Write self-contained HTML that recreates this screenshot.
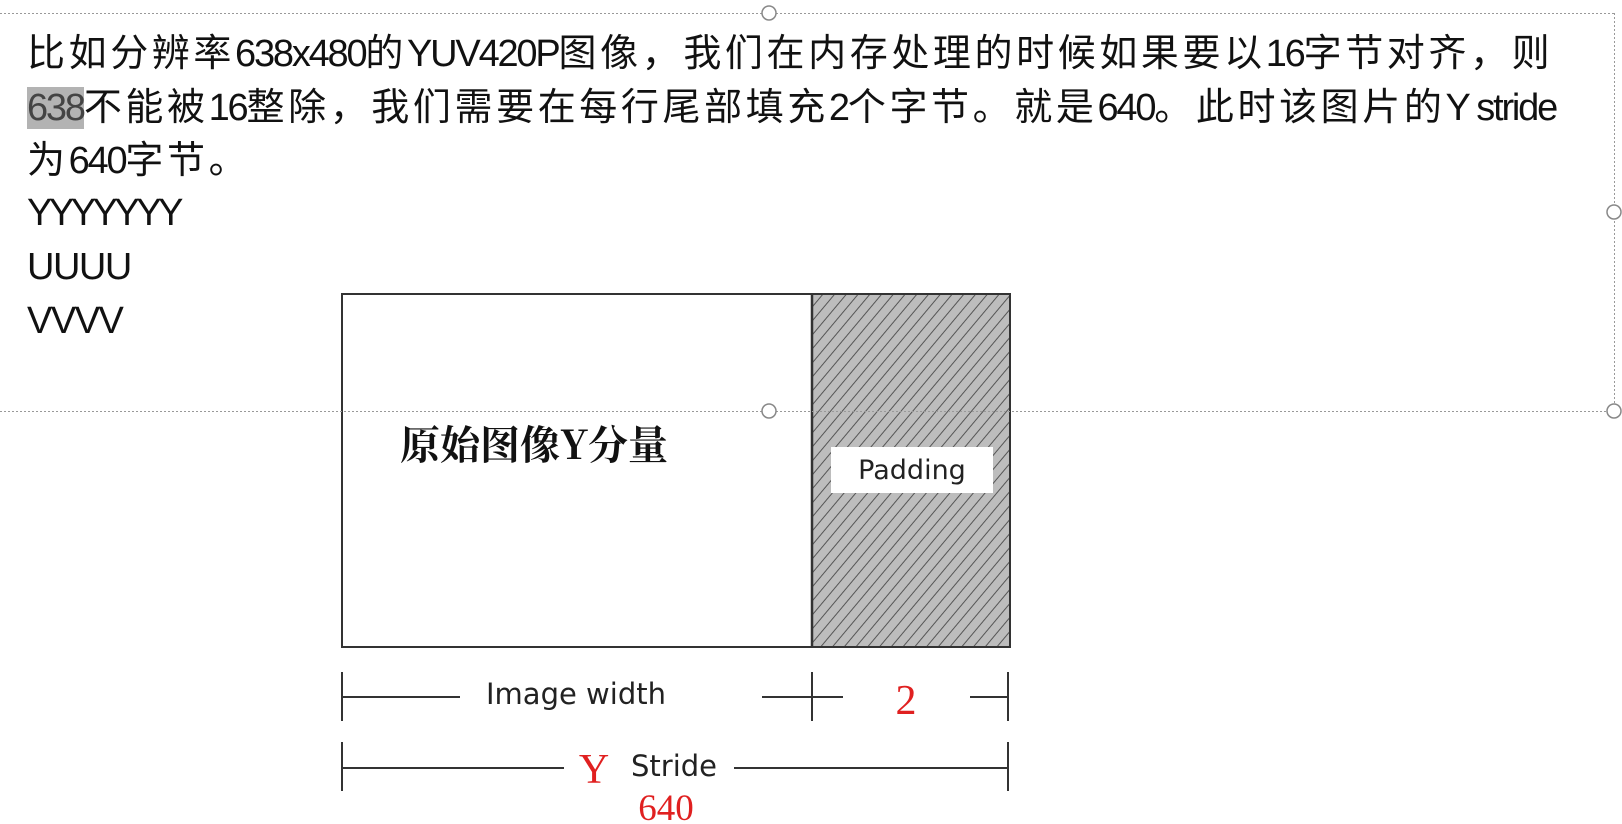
<!DOCTYPE html>
<html><head><meta charset="utf-8"><style>
html,body{margin:0;padding:0;background:#fff;width:1622px;height:824px;overflow:hidden;position:relative}
.t{position:absolute;left:27px;font-family:"Liberation Sans","Noto Sans CJK SC",sans-serif;font-size:38px;color:#111;white-space:nowrap;line-height:54px;letter-spacing:3.6px}
.l{letter-spacing:-2.2px}
.hl{background:#b3b3b3;color:#444}
svg{position:absolute;left:0;top:0}
</style></head><body>
<svg width="1622" height="824" viewBox="0 0 1622 824">
<defs>
<pattern id="h" width="9" height="9" patternUnits="userSpaceOnUse" patternTransform="rotate(40)">
<rect width="9" height="9" fill="#bdbdbd"/><line x1="0" y1="0" x2="0" y2="9" stroke="#555" stroke-width="2"/>
</pattern>
</defs>
<rect x="812" y="294" width="198" height="353" fill="url(#h)"/>
<rect x="342" y="294" width="668" height="353" fill="none" stroke="#333" stroke-width="2"/>
<line x1="812" y1="294" x2="812" y2="647" stroke="#333" stroke-width="2.5"/>
<rect x="831" y="447" width="162" height="46" fill="#fff"/>
<text x="912" y="479" text-anchor="middle" font-family="DejaVu Sans,sans-serif" font-size="27" fill="#222">Padding</text>
<text x="400" y="459" font-family="Noto Serif CJK SC,serif" font-weight="bold" font-size="40" fill="#111">原始图像Y分量</text>
<g stroke="#333" stroke-width="2" fill="none">
<line x1="342" y1="672" x2="342" y2="721"/><line x1="812" y1="672" x2="812" y2="721"/><line x1="1008" y1="672" x2="1008" y2="721"/>
<line x1="342" y1="697" x2="460" y2="697"/><line x1="762" y1="697" x2="843" y2="697"/><line x1="970" y1="697" x2="1008" y2="697"/>
<line x1="342" y1="742" x2="342" y2="791"/><line x1="1008" y1="742" x2="1008" y2="791"/>
<line x1="342" y1="768" x2="564" y2="768"/><line x1="734" y1="768" x2="1008" y2="768"/>
</g>
<text x="486" y="704" font-family="DejaVu Sans,sans-serif" font-size="29" fill="#222">Image width</text>
<text x="906" y="714" text-anchor="middle" font-family="Liberation Serif,serif" font-size="42" fill="#e02020">2</text>
<text x="594" y="783" text-anchor="middle" font-family="Liberation Serif,serif" font-size="42" fill="#e02020">Y</text>
<text x="631" y="776" font-family="DejaVu Sans,sans-serif" font-size="29" fill="#222">Stride</text>
<text x="666" y="820" text-anchor="middle" font-family="Liberation Serif,serif" font-size="37" fill="#e02020">640</text>
<g stroke="#999" stroke-width="1" stroke-dasharray="2,2" fill="none">
<line x1="0" y1="13.5" x2="1614" y2="13.5"/><line x1="0" y1="411.5" x2="1614" y2="411.5"/><line x1="1614.5" y1="13" x2="1614.5" y2="411"/>
</g>
<g fill="#fff" stroke="#888" stroke-width="1.5">
<circle cx="769" cy="13" r="7"/><circle cx="1614" cy="212" r="7"/><circle cx="1614" cy="411" r="7"/><circle cx="769" cy="411" r="7"/>
</g>
</svg>
<div class="t" style="top:27px">比如分辨率<span class="l">638x480</span>的<span class="l">YUV420P</span>图像，我们在内存处理的时候如果要以<span class="l">16</span>字节对齐，则</div>
<div class="t" style="top:81px"><span class="hl l">638</span>不能被<span class="l">16</span>整除，我们需要在每行尾部填充<span class="l">2</span>个字节。就是<span class="l">640</span>。此时该图片的<span class="l">Y stride</span></div>
<div class="t" style="top:134px">为<span class="l">640</span>字节。</div>
<div class="t" style="top:186px;letter-spacing:-3.5px">YYYYYYY</div>
<div class="t" style="top:240px;letter-spacing:-1.5px">UUUU</div>
<div class="t" style="top:294px;letter-spacing:-1.5px">VVVV</div>
</body></html>
